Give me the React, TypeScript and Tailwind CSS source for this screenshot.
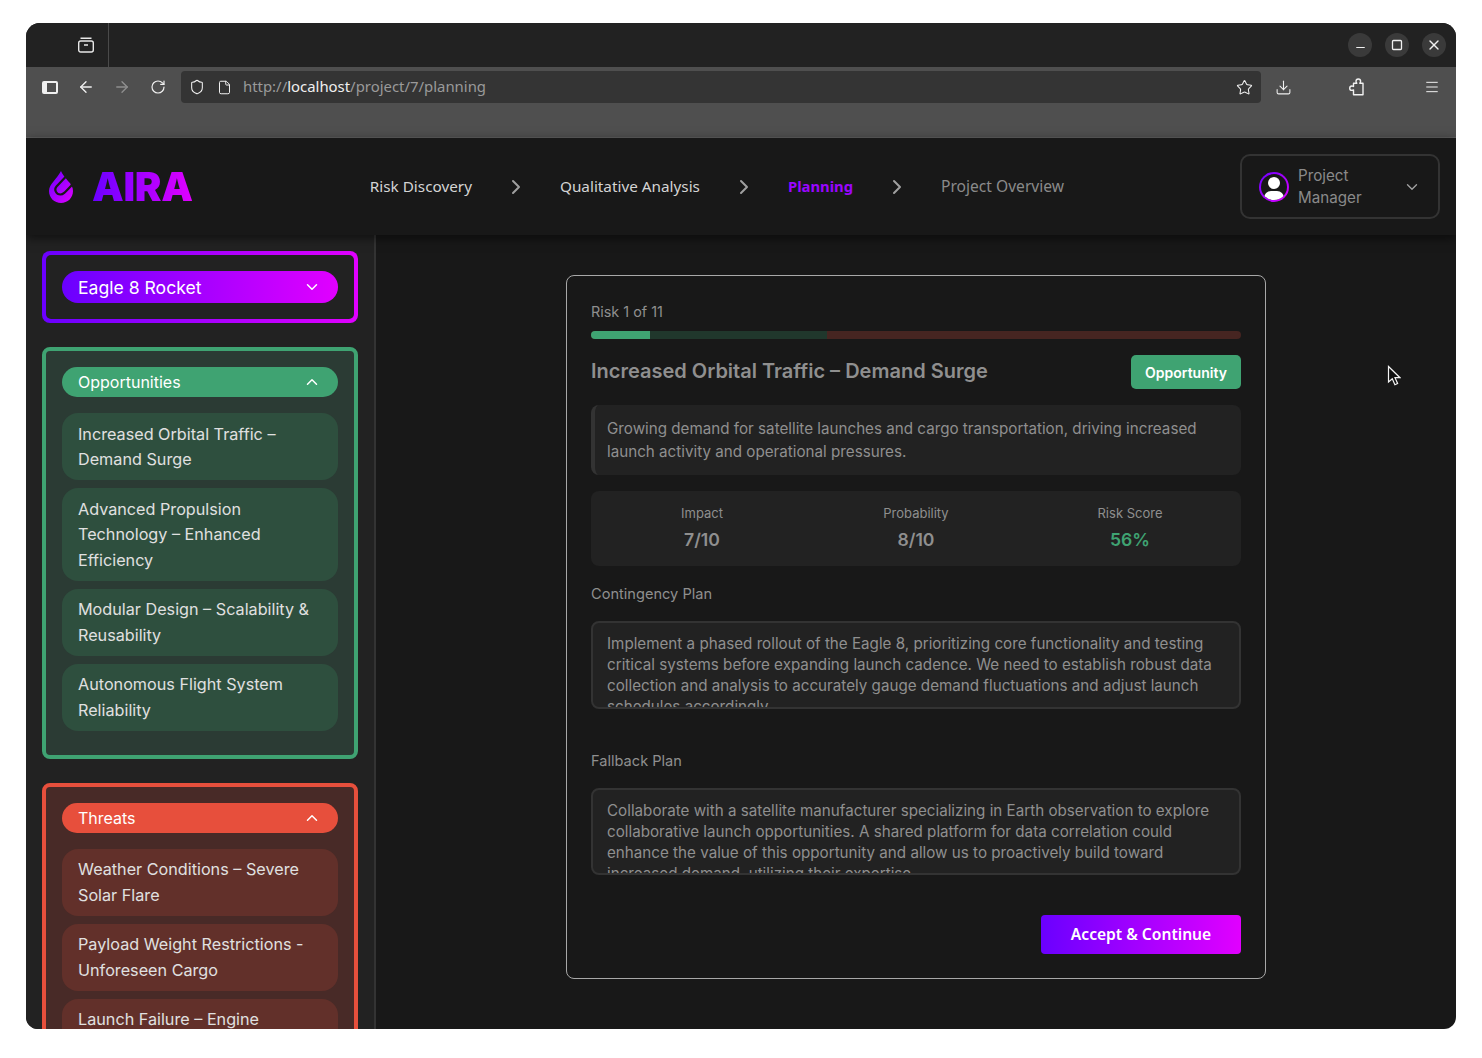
import { ArrowLeft, ArrowRight, ChevronDown, ChevronRight, ChevronUp, Download, File, Menu, Minus, RotateCw, Shield, Square, Star, X } from "lucide-react";

const opportunities = [
  "Increased Orbital Traffic – Demand Surge",
  "Advanced Propulsion Technology – Enhanced Efficiency",
  "Modular Design – Scalability & Reusability",
  "Autonomous Flight System Reliability",
];

const threats = [
  "Weather Conditions – Severe Solar Flare",
  "Payload Weight Restrictions - Unforeseen Cargo",
  "Launch Failure – Engine Malfunction",
];

const contingency =
  "Implement a phased rollout of the Eagle 8, prioritizing core functionality and testing critical systems before expanding launch cadence. We need to establish robust data collection and analysis to accurately gauge demand fluctuations and adjust launch schedules accordingly.";

const fallback =
  "Collaborate with a satellite manufacturer specializing in Earth observation to explore collaborative launch opportunities. A shared platform for data correlation could enhance the value of this opportunity and allow us to proactively build toward increased demand, utilizing their expertise.";

const Browser = () => (
  <div className="font-['Noto_Sans',sans-serif]">
    <div className="flex h-[44px] items-center bg-[#222222]">
      <div className="flex h-full w-[83px] items-center justify-end border-r border-[#4a4a4a] pr-[12px]">
        <svg width="18" height="18" viewBox="0 0 18 18" fill="none" stroke="#e8e8e8" strokeWidth="1.4" className="mr-[1px]">
          <rect x="1.7" y="5" width="14.6" height="11" rx="2" />
          <path d="M3.5 2.3h11M7 9h4" />
        </svg>
      </div>
      <div className="ml-auto mr-[10px] flex gap-[13px]">
        <div className="flex h-6 w-6 items-center justify-center rounded-full bg-[#3a3a3a] text-[#f0f0f0]">
          <Minus className="mt-[4px] h-[13px] w-[13px]" strokeWidth={2.2} />
        </div>
        <div className="flex h-6 w-6 items-center justify-center rounded-full bg-[#3a3a3a] text-[#f0f0f0]">
          <Square className="h-[12px] w-[12px]" strokeWidth={2.6} />
        </div>
        <div className="flex h-6 w-6 items-center justify-center rounded-full bg-[#3a3a3a] text-[#f0f0f0]">
          <X className="h-[16px] w-[16px]" strokeWidth={2} />
        </div>
      </div>
    </div>
    <div className="h-[71px] border-b border-[#5f5f5f] bg-[#4f4f4f]">
      <div className="flex h-[38px] items-center pt-[2px] text-[#f0f0f0]">
        <div className="ml-[16px] flex h-[13px] w-[16px] rounded-[2px] border-2 border-[#f0f0f0]">
          <div className="w-[3px] bg-[#f0f0f0]" />
        </div>
        <ArrowLeft className="ml-[19px] h-[18px] w-[18px]" strokeWidth={1.8} />
        <ArrowRight className="ml-[18px] h-[18px] w-[18px] text-[#8f8f8f]" strokeWidth={1.8} />
        <RotateCw className="ml-[19px] h-[16px] w-[16px]" strokeWidth={1.8} />
        <div className="ml-[15px] flex h-[32px] w-[1080px] items-center rounded-[4px] bg-[#343434] pl-[8px] pr-[8px] text-[14.900px]">
          <Shield className="h-[16px] w-[16px]" strokeWidth={1.6} />
          <File className="ml-[12px] h-[15px] w-[15px]" strokeWidth={1.6} />
          <div className="ml-[11px] pb-[1px] text-[#9a9a9a]">
            http://<span className="text-[#efefef]">localhost</span>/project/7/planning
          </div>
          <Star className="ml-auto h-[17px] w-[17px]" strokeWidth={1.5} />
        </div>
        <Download className="ml-[14px] h-[17px] w-[17px]" strokeWidth={1.5} />
        <svg width="16" height="18" viewBox="0 0 16 18" fill="none" stroke="#f0f0f0" strokeWidth="1.4" strokeLinejoin="round" className="ml-[57px]">
          <path d="M14 5.200h-3.200c.6-.7.8-1.300.8-1.900a2.300 2.300 0 0 0-4.600 0c0 .6.2 1.200.8 1.900H4.500v3.300c-.7-.4-1.200-.5-1.600-.5a2.200 2.200 0 0 0 0 4.400c.4 0 .9-.1 1.600-.5v4.800H14Z" />
        </svg>
        <Menu className="ml-[59px] h-[16px] w-[16px]" strokeWidth={1.5} />
      </div>
    </div>
  </div>
);

const Header = () => (
  <header className="relative z-10 flex h-[97px] items-center bg-[#181818] shadow-[0_3px_10px_rgba(0,0,0,0.55)]">
    <svg width="24" height="32" viewBox="0 0 24 32" className="ml-[23px]" fill="none">
      <defs>
        <linearGradient id="drop" x1="0" y1="0" x2="1" y2="1">
          <stop offset="0" stopColor="#6a00ff" />
          <stop offset="1" stopColor="#e100ff" />
        </linearGradient>
      </defs>
      <path d="M12 0C13 3 16 6 19 10C22 13 24 16 24 20C24 27 18.500 32 12 32C5.500 32 0 27 0 20C0 13 8 8 12 0Z" fill="url(#drop)" />
      <path d="M16.500 6L7.500 15.500C4.800 18.500 7 23.500 11.500 23.500C14 23.500 15.500 21.800 23 13.800" stroke="#181818" strokeWidth="2.200" />
    </svg>
    <div className="ml-[19px] bg-[linear-gradient(90deg,#6a00ff,#e100ff)] bg-clip-text font-['Inter',sans-serif] text-[40px] font-black leading-none tracking-[-0.3px] text-transparent">
      AIRA
    </div>
    <nav className="ml-[177px] flex items-center font-['Noto_Sans',sans-serif] text-[15.300px]">
      <span className="text-[#d4d4d4]">Risk Discovery</span>
      <ChevronRight className="ml-[32px] mr-[32px] h-6 w-6 text-[#a0a0a0]" strokeWidth={2} />
      <span className="text-[#d4d4d4]">Qualitative Analysis</span>
      <ChevronRight className="ml-[32px] mr-[32px] h-6 w-6 text-[#a0a0a0]" strokeWidth={2} />
      <span className="text-[14.800px] font-bold text-[#9a06ff]">Planning</span>
      <ChevronRight className="ml-[32px] mr-[32px] h-6 w-6 text-[#a0a0a0]" strokeWidth={2} />
      <span className="text-[15.600px] text-[#8a8a8a]">Project Overview</span>
    </nav>
    <div className="ml-auto mr-[16px] flex h-[65px] w-[200px] items-center rounded-[10px] border-2 border-[#333333] pl-[17px] pr-[17px]">
      <div className="h-[30px] w-[30px] rounded-full bg-[linear-gradient(135deg,#6a00ff,#e100ff)] p-[2px]">
        <div className="relative h-full w-full overflow-hidden rounded-full bg-[#181818]">
          <div className="absolute left-[7px] top-[3px] h-[12px] w-[12px] rounded-full bg-white" />
          <div className="absolute left-[3px] top-[17px] h-[14px] w-[20px] rounded-full bg-white" />
        </div>
      </div>
      <div className="ml-[9px] w-[80px] font-['Inter',sans-serif] text-[15.200px] leading-[22px] text-[#8a8a8a]">Project Manager</div>
      <ChevronDown className="ml-auto h-[18px] w-[18px] text-[#a0a0a0]" strokeWidth={1.8} />
    </div>
  </header>
);

type GroupProps = {
  title: string;
  items: string[];
  frame: string;
  pill: string;
  item: string;
};

const Group = ({ title, items, frame, pill, item }: GroupProps) => (
  <div className={`mt-6 rounded-lg border-4 p-4 pb-6 ${frame}`}>
    <div className={`flex h-[30px] items-center justify-between rounded-full pl-4 pr-[17px] text-[16px] text-white ${pill}`}>
      {title}
      <ChevronUp className="h-[18px] w-[18px]" strokeWidth={2} />
    </div>
    <div className="mt-4 flex flex-col gap-2">
      {items.map((text) => (
        <div key={text} className={`rounded-2xl px-4 pb-[7.500px] pt-[8.500px] text-[16.200px] leading-[25.500px] text-[#e0e0e0] ${item}`}>
          {text}
        </div>
      ))}
    </div>
  </div>
);

const Sidebar = () => (
  <aside className="h-full w-[350px] shrink-0 overflow-hidden border-r-2 border-[#333333] bg-[#222222] px-4 pt-4">
    <div className="rounded-lg bg-[linear-gradient(90deg,#6a00ff,#e100ff)] p-1">
      <div className="rounded-[5px] bg-[#222222] p-4">
        <div className="flex h-[32px] items-center justify-between rounded-full bg-[linear-gradient(90deg,#6a00ff,#e100ff)] pl-4 pr-[17px] text-[17.600px] text-white">
          <span className="pt-[2px]">Eagle 8 Rocket</span>
          <ChevronDown className="h-[18px] w-[18px]" strokeWidth={2} />
        </div>
      </div>
    </div>
    <Group title="Opportunities" items={opportunities} frame="border-[#3fa372] bg-[#2b3b34]" pill="bg-[#3fa372]" item="bg-[#2e4f3e]" />
    <Group title="Threats" items={threats} frame="border-[#e74f3c] bg-[#482a27]" pill="bg-[#e74f3c]" item="bg-[#62302a]" />
  </aside>
);

const PlanField = ({ label, value, height }: { label: string; value: string; height: string }) => (
  <div>
    <div className="text-[14.600px] leading-[20px] text-[#8f8f8f]">{label}</div>
    <textarea
      readOnly
      value={value}
      className={`mt-[17px] block w-full resize-none overflow-hidden rounded-lg border-2 border-[#333333] bg-[#222222] px-[14px] py-[10px] text-[15.200px] leading-[21px] text-[#8f8f8f] outline-none ${height}`}
    />
  </div>
);

const RiskCard = () => (
  <div className="h-[704px] w-[700px] rounded-lg border border-[#a8a8a8] bg-[#181818] p-6">
    <div className="text-[14.400px] leading-[24px] text-[#8f8f8f]">Risk 1 of 11</div>
    <div className="mt-[7px] flex h-2 overflow-hidden rounded-full bg-[#462521]">
      <div className="w-[59px] bg-[#3fa372]" />
      <div className="w-[177px] bg-[#20372c]" />
    </div>
    <div className="mt-4 flex h-[34px] items-center justify-between">
      <div className="pb-[2px] text-[20px] font-semibold text-[#8f8f8f]">Increased Orbital Traffic – Demand Surge</div>
      <div className="flex h-[34px] w-[110px] items-center justify-center rounded-[5px] bg-[#3fa372] text-[14px] font-semibold text-white">Opportunity</div>
    </div>
    <div className="mt-4 rounded-lg border-l-4 border-[#333333] bg-[#222222] px-3 py-[12px] text-[15.200px] leading-[23px] text-[#8f8f8f]">
      Growing demand for satellite launches and cargo transportation, driving increased launch activity and operational pressures.
    </div>
    <div className="mt-4 grid h-[75px] grid-cols-3 rounded-lg bg-[#222222] px-[4px] pt-[14px] text-center">
      {[
        ["Impact", "7/10", "text-[#8f8f8f]"],
        ["Probability", "8/10", "text-[#8f8f8f]"],
        ["Risk Score", "56%", "text-[#3fa372]"],
      ].map(([label, value, color]) => (
        <div key={label}>
          <div className="text-[13px] leading-[17px] text-[#8f8f8f]">{label}</div>
          <div className={`mt-[4px] text-[17.600px] font-semibold leading-[28px] ${color}`}>{value}</div>
        </div>
      ))}
    </div>
    <div className="mt-[18px]">
      <PlanField label="Contingency Plan" value={contingency} height="h-[88px]" />
    </div>
    <div className="mt-[42px]">
      <PlanField label="Fallback Plan" value={fallback} height="h-[87px]" />
    </div>
    <div className="mt-[40px] flex justify-end">
      <div className="flex h-[39px] w-[200px] items-center justify-center rounded-[4px] bg-[linear-gradient(90deg,#6a00ff,#e100ff)] font-['Noto_Sans',sans-serif] text-[15.600px] font-semibold text-white">
        Accept &amp; Continue
      </div>
    </div>
  </div>
);

export default function App() {
  return (
    <div className="h-[1058px] w-[1482px] overflow-hidden bg-white pl-[26px] pt-[23px] font-['Inter',sans-serif]">
      <div className="relative flex h-[1006px] w-[1430px] flex-col overflow-hidden rounded-t-[14px] rounded-b-[12px] bg-[#181818]">
        <Browser />
        <Header />
        <div className="flex min-h-0 flex-1">
          <Sidebar />
          <main className="flex flex-1 justify-center pt-[40px]">
            <RiskCard />
          </main>
        </div>
        <svg width="14" height="21" viewBox="0 0 14 21" className="absolute left-[1361px] top-[342px]">
          <path d="M1.500 1.500v15.500l3.800-3.300 2.600 6 2.700-1.200-2.600-5.800h5Z" fill="#111" stroke="#f5f5f5" strokeWidth="1.200" />
        </svg>
      </div>
    </div>
  );
}
